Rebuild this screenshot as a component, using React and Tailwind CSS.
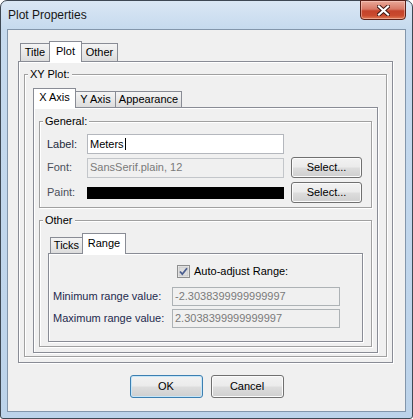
const etched = "border border-[#a0a0a0] shadow-[1px_1px_0_#fff,inset_1px_1px_0_#fff]";
const pane = "border border-[#898c95] shadow-[1px_1px_0_#fff,inset_1px_1px_0_#fff] bg-[#f0f0f0]";
const btnFace = "bg-[linear-gradient(180deg,#f2f2f2_0%,#ebebeb_48%,#dddddd_52%,#cfcfcf_100%)]";

function Tab({ label, selected, w, h }) {
  return (
    <div
      className={`${w} ${h} relative -ml-px first:ml-0 border border-b-0 border-[#898c95] flex items-center justify-center text-[11px] leading-[13px] text-black ${
        selected ? "-mb-px z-10 bg-white pb-[2px]" : "bg-[linear-gradient(180deg,#f4f4f4_0%,#e9e9e9_50%,#dcdcdc_100%)]"
      }`}
    >
      {label}
    </div>
  );
}

function Group({ title, className, children }) {
  return (
    <div className={`relative ${etched} ${className}`}>
      <span className="absolute left-[3px] -top-[8px] px-[2px] bg-[#f0f0f0] text-[11px] leading-[14px] text-black">{title}</span>
      {children}
    </div>
  );
}

function Button({ children, w, h, def }) {
  return (
    <div
      className={`${w} ${h} rounded-[3px] border ${btnFace} flex items-center justify-center text-[11px] text-black ${
        def ? "border-[#3c7fb1] shadow-[inset_0_0_0_1px_#c6e6f8]" : "border-[#707070] shadow-[inset_0_0_0_1px_#fbfbfb]"
      }`}
    >
      {children}
    </div>
  );
}

function CloseButton() {
  return (
    <div className="-mt-px w-[46px] h-[20px] rounded-b-[4px] border border-[#5a2118] bg-[linear-gradient(180deg,#e9a898_0%,#d87966_45%,#c4432b_55%,#c94a2e_80%,#e07a55_100%)] shadow-[inset_0_0_0_1px_rgba(255,220,210,0.45)] flex items-center justify-center">
      <svg width="13" height="11" viewBox="0 0 13 11">
        <path d="M2 1.5 L11 9.5 M11 1.5 L2 9.5" stroke="#3a1510" strokeWidth="4" strokeLinecap="square" />
        <path d="M2 1.5 L11 9.5 M11 1.5 L2 9.5" stroke="#ffffff" strokeWidth="2.2" strokeLinecap="square" />
      </svg>
    </div>
  );
}

function CheckBox() {
  return (
    <svg width="13" height="13" viewBox="0 0 13 13">
      <rect x="0.5" y="0.5" width="12" height="12" fill="#f4f4f4" stroke="#8e8f8f" />
      <rect x="2" y="2" width="9" height="9" fill="#dedede" stroke="#c4c4c4" strokeWidth="0.8" />
      <path d="M3 6.5 L5.3 9.2 L10 3.2" fill="none" stroke="#4b5e8f" strokeWidth="1.8" />
    </svg>
  );
}

export default function App() {
  return (
    <div className="w-[413px] h-[419px] bg-white font-['Liberation_Sans',Arial,sans-serif]">
      <div className="w-[413px] h-[419px] border border-[#3e4853] rounded-t-[7px] rounded-b-[3px] bg-[linear-gradient(180deg,#dae7f4_0px,#c6daee_28px,#bcd3ea_100%)] px-[6px] pb-[6px] flex flex-col">
        {/* title bar */}
        <div className="h-[28px] shrink-0 flex justify-between">
          <span className="pt-[7px] pl-px text-[12px] leading-[15px] text-[#161616]">Plot Properties</span>
          <CloseButton />
        </div>

        {/* client */}
        <div className="flex-1 border border-[#8396ab] bg-[#f0f0f0] pt-[11px] pl-[10px] pr-[12px] pb-[13px] flex flex-col">
          <div className="flex items-end h-[20px] pl-[2px]">
            <Tab label="Title" w="w-[30px]" h="h-[18px]" />
            <Tab label="Plot" w="w-[33px]" h="h-[21px]" selected />
            <Tab label="Other" w="w-[37px]" h="h-[18px]" />
          </div>
          <div className={`${pane} h-[302px] pt-[12px] px-[5px] pb-[5px] flex flex-col`}>
            <Group title="XY Plot:" className="flex-1 pt-[13px] px-[8px] pb-[3px] flex flex-col">
              <div className="flex items-end h-[19px]">
                <Tab label="X Axis" w="w-[43px]" h="h-[20px]" selected />
                <Tab label="Y Axis" w="w-[41px]" h="h-[16px]" />
                <Tab label="Appearance" w="w-[67px]" h="h-[16px]" />
              </div>
              <div className={`${pane} flex-1 pt-[13px] px-[5px] pb-[5px] flex flex-col`}>
                <Group title="General:" className="h-[87px] pt-[12px] pl-[7px] pr-[9px] text-[11px] text-[#222a3c]">
                  <div className="flex items-center h-[20px]">
                    <span className="w-[40px]">Label:</span>
                    <div className="w-[197px] h-[20px] border border-[#b4b7bd] bg-white pl-[2px] flex items-center text-black">
                      <span>Meters</span>
                      <span className="w-px h-[12px] bg-black ml-px" />
                    </div>
                  </div>
                  <div className="flex items-center h-[21px] mt-[3px]">
                    <span className="w-[40px] text-[#4a4f5a]">Font:</span>
                    <div className="w-[197px] h-[20px] border border-[#c3c6ca] pl-[2px] flex items-center text-[#7a7a7a]">
                      SansSerif.plain, 12
                    </div>
                    <div className="ml-[7px]">
                      <Button w="w-[71px]" h="h-[21px]">Select...</Button>
                    </div>
                  </div>
                  <div className="flex items-center h-[21px] mt-[4px]">
                    <span className="w-[40px] text-[#4a4f5a]">Paint:</span>
                    <div className="w-[197px] h-[12px] bg-black" />
                    <div className="ml-[7px]">
                      <Button w="w-[71px]" h="h-[21px]">Select...</Button>
                    </div>
                  </div>
                </Group>

                <Group title="Other" className="h-[127px] mt-[12px] pt-[12px] px-[8px] pb-[4px] flex flex-col">
                  <div className="flex items-end h-[20px] pl-[2px]">
                    <Tab label="Ticks" w="w-[33px]" h="h-[16px]" />
                    <Tab label="Range" w="w-[44px]" h="h-[21px]" selected />
                  </div>
                  <div className={`${pane} h-[89px] pt-[10px] pl-[4px] pb-[13px] text-[11px]`}>
                    <div className="flex items-center h-[14px] pl-[124px]">
                      <CheckBox />
                      <span className="ml-[4px] text-black">Auto-adjust Range:</span>
                    </div>
                    <div className="flex items-center h-[19px] mt-[9px]">
                      <span className="w-[119px] text-[#1e2a4e]">Minimum range value:</span>
                      <div className="w-[168px] h-[19px] border border-[#adb2b5] pl-[2px] flex items-center text-[#7a7a7a]">
                        -2.3038399999999997
                      </div>
                    </div>
                    <div className="flex items-center h-[19px] mt-[3px]">
                      <span className="w-[119px] text-[#1e2a4e]">Maximum range value:</span>
                      <div className="w-[168px] h-[19px] border border-[#adb2b5] pl-[2px] flex items-center text-[#7a7a7a]">
                        2.3038399999999997
                      </div>
                    </div>
                  </div>
                </Group>
              </div>
            </Group>
          </div>

          <div className="mt-[12px] flex justify-center gap-[8px] pl-[2px]">
            <Button w="w-[73px]" h="h-[23px]" def>OK</Button>
            <Button w="w-[73px]" h="h-[23px]">Cancel</Button>
          </div>
        </div>
      </div>
    </div>
  );
}
